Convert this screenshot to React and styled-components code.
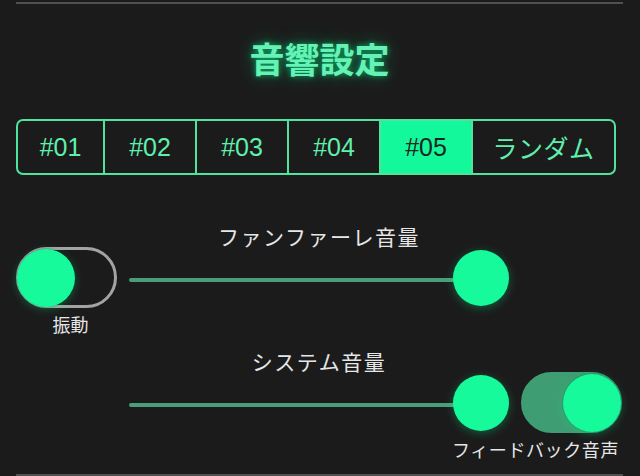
import React from "react";
import styled, { createGlobalStyle } from "styled-components";

const GlobalStyle = createGlobalStyle`
  html, body {
    margin: 0;
    padding: 0;
    background: #1b1b1b;
  }
  body {
    font-family: "Liberation Sans", "Noto Sans CJK JP", sans-serif;
  }
`;

const Screen = styled.div`
  width: 640px;
  height: 476px;
  padding: 0 16px;
  box-sizing: border-box;
  overflow: hidden;
  background: #1b1b1b;
`;

const Panel = styled.div`
  width: 607px;
  height: 474px;
  box-sizing: border-box;
  margin-top: 2px;
  border-top: 2px solid #505050;
  border-bottom: 2px solid #505050;
  display: flex;
  flex-direction: column;
`;

const Title = styled.h1`
  margin: 32px 0 0;
  text-align: center;
  font-family: "Noto Sans CJK JP", sans-serif;
  font-size: 35px;
  line-height: 44px;
  font-weight: 600;
  color: #66f2b4;
  text-shadow: 0 0 6px rgba(0, 255, 150, 0.6), 0 0 20px rgba(0, 255, 150, 0.3);
`;

const Tabs = styled.div`
  margin-top: 39px;
  width: 600px;
  height: 56px;
  box-sizing: border-box;
  border: 2px solid #4fe39d;
  border-radius: 7px;
  display: flex;
  overflow: hidden;
`;

const Tab = styled.div`
  flex: ${(p) => (p.wide ? "0 0 143px" : "0 0 92px")};
  box-sizing: border-box;
  display: flex;
  align-items: center;
  justify-content: center;
  border-left: 2px solid #4fe39d;
  &:first-child {
    border-left: none;
    flex-basis: 85px;
  }
  background: ${(p) => (p.active ? "#14f89c" : "transparent")};
  color: ${(p) => (p.active ? "#1b2520" : "#5ff0ad")};
  font-size: 25px;
  letter-spacing: ${(p) => (p.wide ? "0.5px" : "0")};
`;

const Block = styled.div`
  display: grid;
  grid-template-columns: 101px 380px 101px;
  grid-template-rows: 22px 61px auto;
  column-gap: 12px;
  margin-top: ${(p) => p.top}px;
`;

const SliderLabel = styled.div`
  grid-column: 2;
  grid-row: 1;
  text-align: center;
  font-family: "Noto Sans CJK JP", sans-serif;
  font-size: 21px;
  line-height: 22px;
  letter-spacing: 1.5px;
  color: #e6e6e6;
`;

const Caption = styled.div`
  grid-column: ${(p) => p.col};
  grid-row: 3;
  margin-top: 5px;
  text-align: center;
  white-space: nowrap;
  font-family: "Noto Sans CJK JP", sans-serif;
  font-size: 18px;
  line-height: 22px;
  color: #e6e6e6;
  ${(p) =>
    p.col === 3
      ? "justify-self: end; margin-right: 3px; letter-spacing: 0.6px;"
      : "margin-left: 8px;"}
`;

const SwitchTrack = styled.div`
  grid-column: ${(p) => p.col};
  grid-row: 2;
  width: 101px;
  height: 61px;
  box-sizing: border-box;
  border-radius: 31px;
  border: 3px solid ${(p) => (p.on ? "#3f9d73" : "#a3a3a3")};
  background: ${(p) => (p.on ? "#3f9d73" : "transparent")};
  display: flex;
  align-items: center;
  justify-content: ${(p) => (p.on ? "flex-end" : "flex-start")};
`;

const Knob = styled.div`
  width: 58px;
  height: 58px;
  flex: 0 0 58px;
  border-radius: 50%;
  background: #16fa9c;
  box-shadow: 0 2px 8px rgba(0, 255, 150, 0.3), 0 0 2px rgba(0, 0, 0, 0.4);
  margin: 0 -2px;
`;

const SliderWrap = styled.div`
  grid-column: 2;
  grid-row: 2;
  position: relative;
  display: flex;
  align-items: center;
`;

const Track = styled.div`
  height: 4px;
  margin-top: ${(p) => p.offset}px;
  border-radius: 2px;
  background: #4a9f78;
`;

const Thumb = styled.div`
  position: absolute;
  top: 50%;
  width: 56px;
  height: 56px;
  margin-top: -28px;
  margin-left: -28px;
  border-radius: 50%;
  background: #16fa9c;
  box-shadow: 0 2px 10px rgba(0, 255, 150, 0.3);
`;

function Slider({ value, offset }) {
  const span = 380 - 56;
  const center = 28 + span * value;
  return (
    <SliderWrap>
      <Track offset={offset} style={{ width: center }} />
      <Thumb style={{ left: center }} />
    </SliderWrap>
  );
}

function Switch({ on, col }) {
  return (
    <SwitchTrack on={on} col={col}>
      <Knob />
    </SwitchTrack>
  );
}

const tabs = ["#01", "#02", "#03", "#04", "#05", "ランダム"];

export default function App() {
  return (
    <>
      <GlobalStyle />
      <Screen>
        <Panel>
          <Title>音響設定</Title>
          <Tabs>
            {tabs.map((t, i) => (
              <Tab key={t} active={i === 4} wide={i === 5}>
                {t}
              </Tab>
            ))}
          </Tabs>

          <Block top={50}>
            <SliderLabel>ファンファーレ音量</SliderLabel>
            <Switch on={false} col={1} />
            <Slider value={1} offset={4} />
            <Caption col={1}>振動</Caption>
          </Block>

          <Block top={15}>
            <SliderLabel>システム音量</SliderLabel>
            <Slider value={1} offset={4} />
            <Switch on col={3} />
            <Caption col={3}>フィードバック音声</Caption>
          </Block>
        </Panel>
      </Screen>
    </>
  );
}
